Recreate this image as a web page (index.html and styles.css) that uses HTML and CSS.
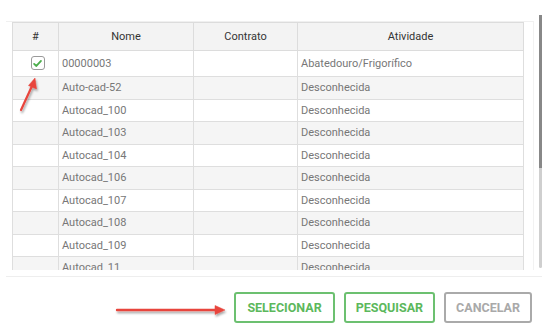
FILE: index.html
```html
<!DOCTYPE html>
<html lang="pt">
<head>
<meta charset="utf-8">
<title>Selecionar</title>
<link rel="stylesheet" href="styles.css">
</head>
<body>
<div class="dialog">
  <div class="content">
    <div class="grid-wrap">
      <table class="grid">
        <colgroup>
          <col class="c-check"><col class="c-nome"><col class="c-contrato"><col class="c-ativ">
        </colgroup>
        <thead>
          <tr><th>#</th><th>Nome</th><th>Contrato</th><th>Atividade</th></tr>
        </thead>
        <tbody>
          <tr class="first"><td class="chk"><span class="checkbox"><svg viewBox="0 0 12 12" width="11" height="11"><path d="M2.3 6.4 L4.8 8.7 L9.8 3.2" fill="none" stroke="#4cae4c" stroke-width="2" stroke-linecap="round" stroke-linejoin="round"/></svg></span></td><td>00000003</td><td></td><td>Abatedouro/Frigorífico</td></tr>
          <tr><td></td><td>Auto-cad-52</td><td></td><td>Desconhecida</td></tr>
          <tr><td></td><td>Autocad_100</td><td></td><td>Desconhecida</td></tr>
          <tr><td></td><td>Autocad_103</td><td></td><td>Desconhecida</td></tr>
          <tr><td></td><td>Autocad_104</td><td></td><td>Desconhecida</td></tr>
          <tr><td></td><td>Autocad_106</td><td></td><td>Desconhecida</td></tr>
          <tr><td></td><td>Autocad_107</td><td></td><td>Desconhecida</td></tr>
          <tr><td></td><td>Autocad_108</td><td></td><td>Desconhecida</td></tr>
          <tr><td></td><td>Autocad_109</td><td></td><td>Desconhecida</td></tr>
          <tr><td></td><td>Autocad_11</td><td></td><td>Desconhecida</td></tr>
          <tr><td></td><td>Autocad_110</td><td></td><td>Desconhecida</td></tr>
        </tbody>
      </table>
    </div>
    <div class="scrollbar"><div class="thumb"></div></div>
  </div>
  <div class="footer">
    <button class="btn btn-green">SELECIONAR</button>
    <button class="btn btn-green">PESQUISAR</button>
    <button class="btn btn-gray">CANCELAR</button>
  </div>
  <svg class="annot" width="555" height="331" viewBox="0 0 555 331">
    <defs>
      <filter id="sh" x="-20%" y="-50%" width="140%" height="300%">
        <feDropShadow dx="1" dy="2" stdDeviation="1.2" flood-color="#000" flood-opacity="0.35"/>
      </filter>
    </defs>
    <g filter="url(#sh)" fill="#e8453c" stroke="#e8453c">
      <line x1="21" y1="110" x2="32" y2="86" stroke-width="2.2" stroke-linecap="round"/>
      <polygon points="35,78 36.5,89 28.5,85.5" stroke-width="0.5"/>
      <line x1="117" y1="310" x2="216" y2="310" stroke-width="2.4" stroke-linecap="round"/>
      <polygon points="225,310 215,305.5 215,314.5" stroke-width="0.5"/>
    </g>
  </svg>
</div>
</body>
</html>
```

FILE: styles.css
```css
* { box-sizing: border-box; }
html, body { margin: 0; padding: 0; background: #fff; }
body {
  font-family: Roboto, "Liberation Sans", Arial, sans-serif;
  width: 555px;
  height: 331px;
  overflow: hidden;
}
.dialog { position: relative; width: 555px; height: 331px; }
.content {
  display: flex;
  align-items: flex-start;
  padding-top: 15px;
}
.grid-wrap {
  margin-top: 6px;
  margin-left: 6px;
  width: 528px;
  height: 249px;
  overflow: hidden;
  border-top: 1px solid #f0f0f0;
  border-right: 1px solid #f2f2f2;
  padding-left: 6px;
}
.grid {
  width: 511px;
  border-collapse: collapse;
  table-layout: fixed;
  font-size: 11px;
}
.c-check { width: 46px; }
.c-nome { width: 135px; }
.c-contrato { width: 104px; }
.c-ativ { width: 226px; }
.grid th {
  height: 28px;
  background: #f3f3f3;
  color: #333;
  font-weight: 400;
  text-align: center;
  border: 1px solid #dcdcdc;
  padding: 0;
}
.grid td {
  height: 22.5px;
  border: 1px solid #dedede;
  color: #777;
  padding: 0 0 0 3px;
  white-space: nowrap;
  overflow: hidden;
}
.grid tbody tr:nth-child(even) td { background: #f5f5f5; }
.grid tr.first td { height: 26px; }
.grid td.chk { text-align: center; padding: 0; }
.checkbox {
  display: inline-flex;
  align-items: center;
  justify-content: center;
  width: 14px;
  height: 14px;
  border: 1px solid #9a9a9a;
  border-radius: 3px;
  background: #fff;
  vertical-align: middle;
  margin-left: 4px;
  margin-top: -1px;
}
.scrollbar {
  margin-left: 5px;
  width: 3px;
  height: 253px;
  background: #cfcfcf;
  border-radius: 0 0 2px 2px;
}
.thumb { height: 153px; background: #888; }
.footer {
  margin-top: 6px;
  margin-left: 6px;
  width: 536px;
  border-top: 1px solid #eeeeee;
  padding: 15px 10px 0 0;
  display: flex;
  justify-content: flex-end;
  gap: 9px;
}
.btn {
  height: 31px;
  padding: 0 10px;
  background: #fff;
  border: 2px solid #6cc070;
  border-radius: 3px;
  font-family: Roboto, "Liberation Sans", Arial, sans-serif;
  font-weight: 700;
  font-size: 12.5px;
  color: #5cb85c;
  letter-spacing: 0;
}
.btn-green:first-child { padding: 0 11px; }
.btn-gray { border-color: #aaaaaa; color: #a9a9a9; }
.annot { position: absolute; left: 0; top: 0; pointer-events: none; }
```
